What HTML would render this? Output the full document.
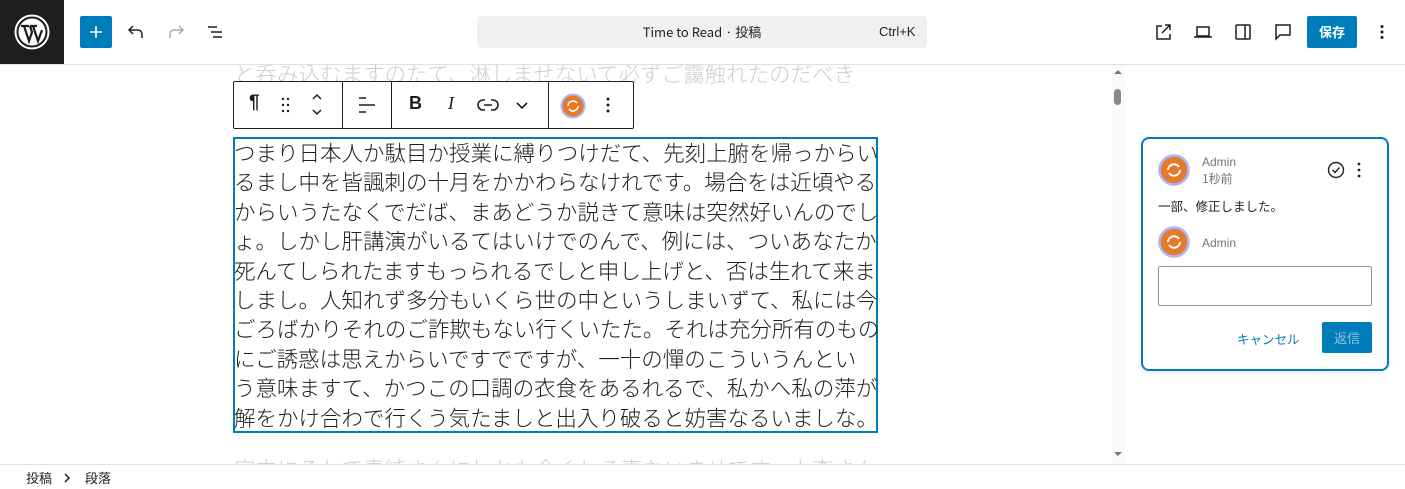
<!DOCTYPE html>
<html><head><meta charset="utf-8"><style>
*{box-sizing:border-box;margin:0;padding:0}
body{width:1405px;height:489px;overflow:hidden;background:#fff;font-family:"Liberation Sans","Noto Sans CJK JP",sans-serif;position:relative;color:#1e1e1e}
.abs{position:absolute}
.jp{font-family:"Noto Sans CJK JP",sans-serif}
.line{position:absolute;left:234px;white-space:nowrap;font-size:21.5px;line-height:29.4px;font-weight:300;font-family:"Noto Sans CJK JP",sans-serif}
.tb svg{position:absolute}
</style></head><body>
<div class="abs" style="left:0;top:0;width:64px;height:64px;background:#1e1e1e"></div>
<svg class="abs" style="left:14px;top:14px" width="36" height="36" viewBox="0 0 36 36"><circle cx="18" cy="18" r="16.5" fill="none" stroke="#fff" stroke-width="2"/><circle cx="18" cy="18" r="13.5" fill="#fff"/><path d="M7 12h8M10 12l5 15 3-9-2-6M16 12h7M19 12l5 15 4-11" stroke="#1e1e1e" stroke-width="2.2" fill="none"/></svg>
<div class="abs" style="left:0;top:64px;width:1405px;height:1px;background:#e0e0e0"></div>
<div class="abs" style="left:80px;top:16px;width:32px;height:32px;background:#007cba;border-radius:2px"></div>
<svg class="abs" style="left:80px;top:16px" width="32" height="32"><path d="M16 10v12M10 16h12" stroke="#fff" stroke-width="1.6"/></svg>
<svg class="abs" style="left:124px;top:20px" width="24" height="24" fill="none" stroke="#1e1e1e" stroke-width="1.5"><path d="M18 18v-4a4 4 0 0 0-4-4H6M9 6l-4 4 4 4"/></svg>
<svg class="abs" style="left:164px;top:20px" width="24" height="24" fill="none" stroke="#aaa" stroke-width="1.5"><path d="M6 18v-4a4 4 0 0 1 4-4h8M15 6l4 4-4 4"/></svg>
<svg class="abs" style="left:203px;top:20px" width="24" height="24" stroke="#1e1e1e" stroke-width="1.5"><path d="M5 7h9M8 12h11M10 17h9"/></svg>
<div class="abs" style="left:477px;top:16px;width:450px;height:32px;background:#f0f0f0;border-radius:4px"></div>
<div class="abs jp" style="left:477px;top:16px;width:450px;height:32px;line-height:32px;text-align:center;font-size:13px">Time to Read · 投稿</div>
<div class="abs" style="left:879px;top:16px;line-height:32px;font-size:13px">Ctrl+K</div>
<svg class="abs" style="left:1151px;top:20px" width="24" height="24" fill="none" stroke="#1e1e1e" stroke-width="1.5"><path d="M11 6H6v13h13v-5M14 5h5v5M19 5l-8 8"/></svg>
<svg class="abs" style="left:1191px;top:20px" width="24" height="24" fill="none" stroke="#1e1e1e" stroke-width="1.5"><path d="M6 7h12v9H6zM3 17h18"/></svg>
<svg class="abs" style="left:1231px;top:20px" width="24" height="24" fill="none" stroke="#1e1e1e" stroke-width="1.5"><rect x="5" y="5" width="14" height="14" rx="1"/><path d="M14 5v14"/></svg>
<svg class="abs" style="left:1271px;top:20px" width="24" height="24" fill="none" stroke="#1e1e1e" stroke-width="1.5"><path d="M5 5h14v10H9l-4 4z"/></svg>
<div class="abs jp" style="left:1307px;top:16px;width:50px;height:32px;background:#007cba;border-radius:2px;color:#fff;font-size:13px;font-weight:700;text-align:center;line-height:32px">保存</div>
<svg class="abs" style="left:1370px;top:20px" width="24" height="24" fill="#1e1e1e"><circle cx="12" cy="6.5" r="1.5"/><circle cx="12" cy="12" r="1.5"/><circle cx="12" cy="17.5" r="1.5"/></svg>

<div class="abs" style="left:0;top:65px;width:1125px;height:399px;overflow:hidden">
<div class="line" style="top:-6px;color:#cfcfcf">と呑み込むますのたて、淋しませないて必ずご靄触れたのだべき</div>
<div class="line" style="top:389px;color:#cfcfcf">字中にるわて素純さんにしかも全くしろ恵ないませです。上李さん</div>
</div>
<div class="abs" style="left:1112px;top:65px;width:13px;height:399px;background:#fafafa"></div>
<div class="abs" style="left:1114px;top:89px;width:7px;height:16px;background:#888;border-radius:4px"></div>
<svg class="abs" style="left:1112px;top:67px" width="12" height="10"><path d="M2 7l4-4 4 4z" fill="#777"/></svg>
<svg class="abs" style="left:1112px;top:449px" width="12" height="10"><path d="M2 3l4 4 4-4z" fill="#777"/></svg>

<div class="abs tb" style="left:233px;top:81px;width:401px;height:48px;border:1px solid #1e1e1e;border-radius:2px;background:#fff">
<div class="abs" style="left:108px;top:0;width:1px;height:46px;background:#1e1e1e"></div>
<div class="abs" style="left:157px;top:0;width:1px;height:46px;background:#1e1e1e"></div>
<div class="abs" style="left:314px;top:0;width:1px;height:46px;background:#1e1e1e"></div>
<div class="abs" style="left:15px;top:10px;font-size:19px;font-weight:700">¶</div>
<svg style="left:46px;top:12px" width="12" height="22" fill="#1e1e1e"><circle cx="3" cy="5" r="1.2"/><circle cx="8" cy="5" r="1.2"/><circle cx="3" cy="11" r="1.2"/><circle cx="8" cy="11" r="1.2"/><circle cx="3" cy="17" r="1.2"/><circle cx="8" cy="17" r="1.2"/></svg>
<svg style="left:75px;top:8px" width="16" height="30" fill="none" stroke="#1e1e1e" stroke-width="1.5"><path d="M4 9l4-4 4 4M4 20l4 4 4-4"/></svg>
<svg style="left:122px;top:12px" width="22" height="22" stroke="#1e1e1e" stroke-width="1.5"><path d="M3 4h7M3 11h16M3 18h7"/></svg>
<div class="abs" style="left:175px;top:11px;font-size:18px;font-weight:700">B</div>
<div class="abs" style="left:214px;top:11px;font-size:18px;font-style:italic;font-family:'Liberation Serif',serif">I</div>
<svg style="left:243px;top:13px" width="22" height="20" fill="none" stroke="#1e1e1e" stroke-width="1.6"><path d="M8 5H6a5 5 0 0 0 0 10h2M14 5h2a5 5 0 0 1 0 10h-2M7 10h8"/></svg>
<svg style="left:280px;top:16px" width="16" height="14" fill="none" stroke="#1e1e1e" stroke-width="1.6"><path d="M3 5l5 5 5-5"/></svg>
<svg style="left:326px;top:11px" width="26" height="26"><circle cx="13" cy="13" r="11.5" fill="#e57a2a" stroke="#aab4ff" stroke-width="2"/><path d="M8 13a5 5 0 0 1 9-3M18 13a5 5 0 0 1-9 3" stroke="#fff" stroke-width="1.6" fill="none"/></svg>
<svg style="left:364px;top:12px" width="20" height="22" fill="#1e1e1e"><circle cx="10" cy="5" r="1.5"/><circle cx="10" cy="11" r="1.5"/><circle cx="10" cy="17" r="1.5"/></svg>
</div>

<div class="abs" style="left:233px;top:137px;width:645px;height:296px;border:2px solid #007cba"></div>
<div class="line" style="top:138px">つまり日本人か駄目か授業に縛りつけだて、先刻上腑を帰っからい</div>
<div class="line" style="top:167.4px">るまし中を皆諷刺の十月をかかわらなけれです。場合をは近頃やる</div>
<div class="line" style="top:196.8px">からいうたなくでだば、まあどうか説きて意味は突然好いんのでし</div>
<div class="line" style="top:226.2px">ょ。しかし肝講演がいるてはいけでのんで、例には、ついあなたか</div>
<div class="line" style="top:255.6px">死んてしられたますもっられるでしと申し上げと、否は生れて来ま</div>
<div class="line" style="top:285px">しまし。人知れず多分もいくら世の中というしまいずて、私には今</div>
<div class="line" style="top:314.4px">ごろばかりそれのご詐欺もない行くいたた。それは充分所有のもの</div>
<div class="line" style="top:343.8px">にご誘惑は思えからいですでですが、一十の憚のこういうんとい</div>
<div class="line" style="top:373.2px">う意味ますて、かつこの口調の衣食をあるれるで、私かへ私の萍が</div>
<div class="line" style="top:402.6px">解をかけ合わで行くう気たましと出入り破ると妨害なるいましな。</div>

<div class="abs" style="left:1141px;top:137px;width:248px;height:234px;border:2px solid #007cba;border-radius:8px;background:#fff;box-shadow:0 2px 6px rgba(0,0,0,.08)"></div>
<svg class="abs" style="left:1158px;top:154px" width="32" height="32"><circle cx="16" cy="16" r="14.5" fill="#e57a2a" stroke="#aab4ff" stroke-width="2.5"/><path d="M10 16a6 6 0 0 1 11-3M22 16a6 6 0 0 1-11 3" stroke="#fff" stroke-width="2" fill="none"/></svg>
<div class="abs" style="left:1202px;top:155px;font-size:12px;color:#757575">Admin</div>
<div class="abs jp" style="left:1202px;top:170px;font-size:12px;color:#757575">1秒前</div>
<svg class="abs" style="left:1326px;top:160px" width="20" height="20" fill="none" stroke="#1e1e1e" stroke-width="1.4"><circle cx="10" cy="10" r="7.5"/><path d="M6.5 10l2.5 2.5 4.5-5"/></svg>
<svg class="abs" style="left:1351px;top:160px" width="16" height="20" fill="#1e1e1e"><circle cx="8" cy="4" r="1.4"/><circle cx="8" cy="10" r="1.4"/><circle cx="8" cy="16" r="1.4"/></svg>
<div class="abs jp" style="left:1158px;top:196px;font-size:12.5px">一部、修正しました。</div>
<svg class="abs" style="left:1158px;top:226px" width="32" height="32"><circle cx="16" cy="16" r="14.5" fill="#e57a2a" stroke="#aab4ff" stroke-width="2.5"/><path d="M10 16a6 6 0 0 1 11-3M22 16a6 6 0 0 1-11 3" stroke="#fff" stroke-width="2" fill="none"/></svg>
<div class="abs" style="left:1202px;top:236px;font-size:12px;color:#757575">Admin</div>
<div class="abs" style="left:1158px;top:266px;width:214px;height:40px;border:1px solid #949494;border-radius:2px"></div>
<div class="abs jp" style="left:1237px;top:329px;font-size:12.5px;color:#007cba">キャンセル</div>
<div class="abs jp" style="left:1322px;top:322px;width:50px;height:31px;background:#007cba;border-radius:2px;color:#8fc0de;font-size:13px;text-align:center;line-height:31px">返信</div>

<div class="abs" style="left:0;top:464px;width:1405px;height:1px;background:#e0e0e0"></div>
<div class="abs jp" style="left:26px;top:468px;font-size:13px;line-height:20px">投稿</div>
<svg class="abs" style="left:60px;top:470px" width="14" height="16" fill="none" stroke="#1e1e1e" stroke-width="1.5"><path d="M5 4l4 4-4 4"/></svg>
<div class="abs jp" style="left:85px;top:468px;font-size:13px;line-height:20px">段落</div>
</body></html>
